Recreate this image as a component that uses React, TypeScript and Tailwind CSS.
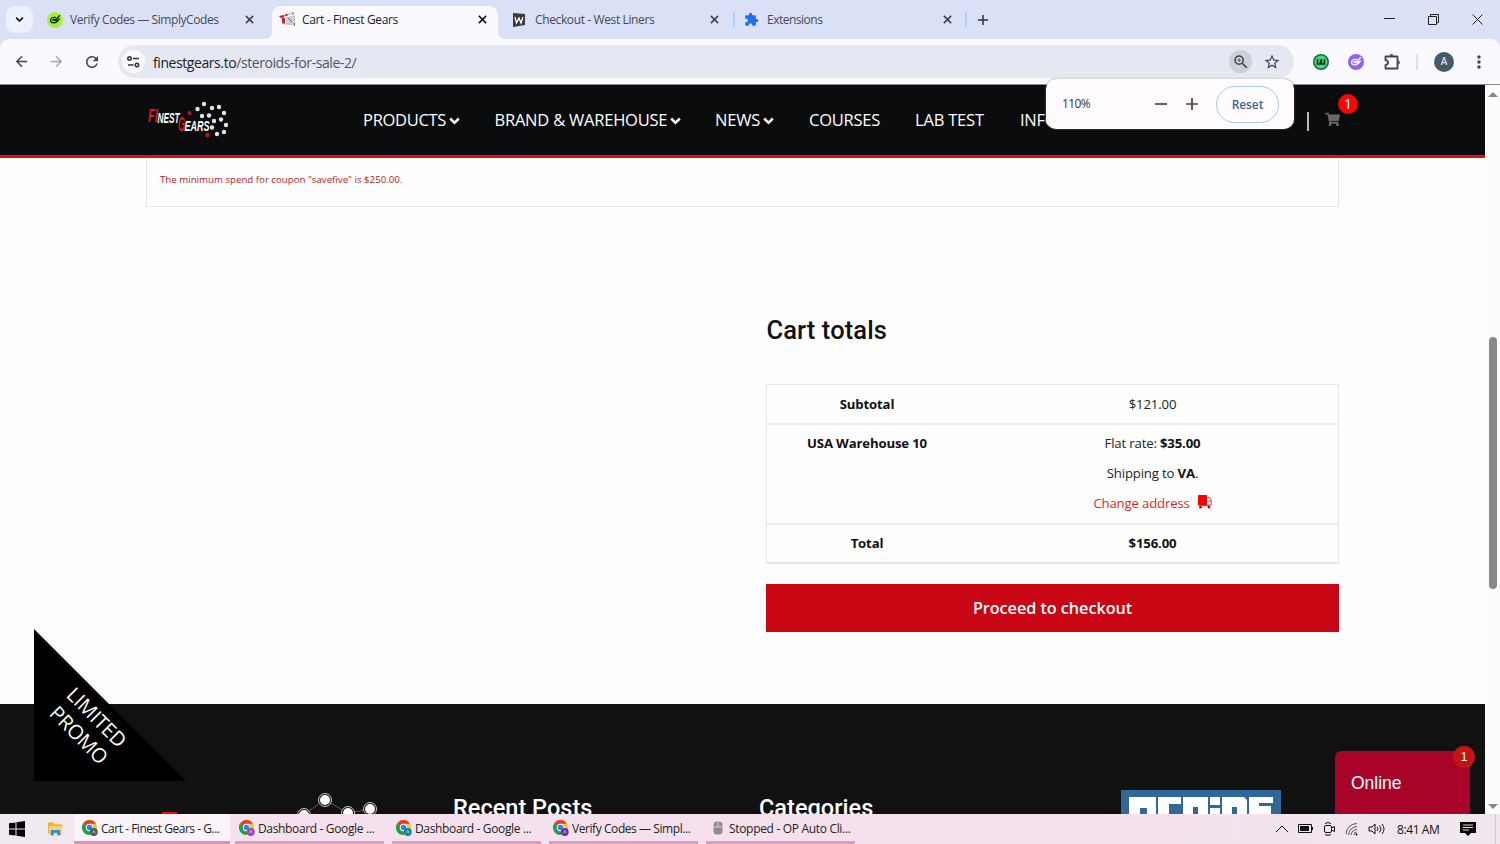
import React from "react";
import { FaShoppingCart } from "react-icons/fa";
import { MdExtension, MdStarOutline, MdZoomIn, MdArrowBack, MdArrowForward, MdRefresh, MdMoreVert } from "react-icons/md";

const UI = "font-['Open_Sans',sans-serif]";

function Close({ className = "" }: { className?: string }) {
  return (
    <svg viewBox="0 0 10 10" className={`size-[9px] shrink-0 ${className}`} stroke="currentColor" strokeWidth="1.700" fill="none">
      <path d="M1 1l8 8M9 1l-8 8" />
    </svg>
  );
}

function Swirl({ className }: { className: string }) {
  return (
    <svg viewBox="0 0 16 16" className={className} fill="none" stroke="currentColor" strokeWidth="1.300" strokeLinecap="round">
      <path d="M8.500 5.500C6 4.800 3.800 6 3.600 8s1.200 3 3.200 2.800C9 10.700 11 9.500 12 7M5.700 8.200C6.500 6.800 7.700 7.200 7.300 8.600M7.500 8.800l5-5M9.500 8.500l3-1.500" />
    </svg>
  );
}

function ChromeLogo({ badge }: { badge: string }) {
  return (
    <svg viewBox="0 0 16 16" className="size-4 shrink-0">
      <circle cx="7.500" cy="7.500" r="7.500" fill="#f9c21a" />
      <path d="M7.500 7.500L1 3.750A7.500 7.500 0 0 1 14 3.750H7.500z" fill="#e0402f" />
      <path d="M7.500 7.500L1 3.750A7.500 7.500 0 0 0 7.500 15l3.500-6z" fill="#1e9e50" />
      <circle cx="7.500" cy="7.500" r="3.700" fill="#fff" />
      <circle cx="7.500" cy="7.500" r="2.800" fill="#3b7de8" />
      <circle cx="11.800" cy="12" r="3.900" className={badge} />
      <path d="M10.400 13.400l1.400-3 1.400 3" stroke="#ffffffaa" strokeWidth=".8" fill="none" />
    </svg>
  );
}

function TabStrip() {
  const inactive = `${UI} pt-px text-[12px] text-[#44495a]`;
  return (
    <div className="flex h-[39px] items-start bg-[#dae1f7]">
      <div className="mt-[6px] ml-[6px] grid h-[27px] w-[27px] place-items-center rounded-[9px] bg-[#edf1fd]">
        <svg viewBox="0 0 10 6" className="h-[5px] w-[9px]" fill="none" stroke="#111" strokeWidth="2"><path d="M1 .8l4 4 4-4" /></svg>
      </div>
      <div className="flex h-[39px] w-[239px] items-center pr-[18px] pl-[14px]">
        <span className="grid size-4 place-items-center rounded-full bg-[#a6f03d] text-[#14230a]"><Swirl className="size-4" /></span>
        <span className={`${inactive} ml-[7px] flex-1 whitespace-nowrap tracking-[-0.42px]`}>Verify Codes — SimplyCodes</span>
        <Close className="text-[#3a3f4c]" />
      </div>
      <div className="relative mt-[6px] flex h-[33px] w-[226px] items-center rounded-t-[9px] bg-[#f9f9ff] pr-[11px] pb-[6px] pl-[7px]">
        <svg className="absolute bottom-0 -left-2 size-2" viewBox="0 0 8 8"><path d="M0 8Q8 8 8 0v8z" fill="#f9f9ff" /></svg>
        <svg className="absolute -right-2 bottom-0 size-2" viewBox="0 0 8 8"><path d="M8 8Q0 8 0 0v8z" fill="#f9f9ff" /></svg>
        <svg viewBox="0 0 17 15" className="h-[15px] w-[17px]" fill="none">
          <path d="M4 4l4-1 7-3M8 6l7-2v8H8z" stroke="#b5b5b9" strokeWidth="1.300" />
          <path d="M7 5l7-1v8l-7-1z" fill="#cfcfd3" />
          <path d="M0 4l5-1 .5 1.500-4 1.500zM3 5l3 1v6l-3-1z" fill="#c0262c" />
          <circle cx="7.500" cy="3" r="1.200" fill="#c0262c" />
          <path d="M9 6l4 4M15.500 11v3M13 3l2-2" stroke="#66666c" />
        </svg>
        <span className={`${UI} ml-[6px] flex-1 whitespace-nowrap pt-px text-[12px] tracking-[-0.36px] text-[#202124]`}>Cart - Finest Gears</span>
        <Close className="text-[#111]" />
      </div>
      <div className="flex h-[39px] w-[235px] items-center pr-[14px] pl-[15px]">
        <svg viewBox="0 0 12 14" className="h-[14px] w-[12px]"><path d="M0 0l12 1v11L0 14z" fill="#3b3b3b" /><path d="M2 4l1.500 6L6 5l2 5 2-6" stroke="#fff" fill="none" strokeWidth="1.300" /></svg>
        <span className={`${inactive} ml-[10px] flex-1 whitespace-nowrap tracking-[-0.38px]`}>Checkout - West Liners</span>
        <Close className="text-[#3a3f4c]" />
      </div>
      <div className="mt-[11px] h-[16px] w-[2px] bg-[#b5cffb]" />
      <div className="flex h-[39px] w-[230px] items-center pr-[13px] pl-[9px]">
        <MdExtension className="size-[15px] text-[#1a73e8]" />
        <span className={`${inactive} ml-[8px] flex-1 whitespace-nowrap tracking-[-0.5px]`}>Extensions</span>
        <Close className="text-[#3a3f4c]" />
      </div>
      <div className="mt-[11px] h-[16px] w-[2px] bg-[#b5cffb]" />
      <svg viewBox="0 0 10 10" className="mt-[15px] ml-[11px] size-[10px]" stroke="#30333d" strokeWidth="1.500"><path d="M5 0v10M0 5h10" /></svg>
      <div className="mt-[14px] mr-[17px] ml-auto flex items-center gap-[33px] text-[#222]">
        <svg viewBox="0 0 11 11" className="size-[11px]" stroke="currentColor"><path d="M0 4.500h11" /></svg>
        <svg viewBox="0 0 11 11" className="size-[11px]" stroke="currentColor" fill="none"><path d="M.5 2.500h8v8h-8zM2.500 2.500v-2h8v8h-2" /></svg>
        <svg viewBox="0 0 11 11" className="size-[11px]" stroke="currentColor"><path d="M.5.500l10 10M10.500.500l-10 10" /></svg>
      </div>
    </div>
  );
}

function Toolbar() {
  return (
    <div className="bg-[#dae1f7]">
      <div className="flex h-[46px] items-center rounded-t-[9px] border-b border-[#8a8c92] bg-[#f9f9ff] text-[#41444f]">
        <MdArrowBack className="ml-[13px] size-[17px]" />
        <MdArrowForward className="ml-[18px] size-[17px] text-[#a5a7ae]" />
        <MdRefresh className="ml-[18px] size-[18px]" />
        <div className="ml-[17px] flex h-[33px] w-[1176px] items-center rounded-full bg-[#e5e8f3] pr-[13px] pl-[4px]">
          <span className="grid size-[23px] place-items-center rounded-full bg-[#fbfbff]">
            <svg viewBox="0 0 13 12" className="h-[12px] w-[13px]" fill="none" stroke="#30333c" strokeWidth="1.600"><circle cx="2.500" cy="2.500" r="1.700" /><path d="M6 2.500h6M1 9h5.500" /><circle cx="10" cy="9" r="1.700" /></svg>
          </span>
          <span className={`${UI} ml-[8px] flex-1 pt-px text-[14px] tracking-[-0.42px] text-[#51555f]`}><span className="text-[#202124]">finestgears.to</span>/steroids-for-sale-2/</span>
          <span className="grid size-[23px] place-items-center rounded-full bg-[#cdcfd9]"><MdZoomIn className="size-[18px]" /></span>
          <MdStarOutline className="ml-[11px] size-[18px]" />
        </div>
        <svg viewBox="0 0 16 16" className="ml-[19px] size-[16px]"><circle cx="8" cy="8" r="8" fill="#176b37" /><circle cx="8" cy="8" r="6.500" fill="#42d777" /><path d="M4.500 5v5h3V6h1v4h3V5" fill="none" stroke="#08331b" strokeWidth="1.500" /></svg>
        <span className="ml-[19px] grid size-[16px] place-items-center rounded-full bg-[#9560f3] text-white"><Swirl className="size-4" /></span>
        <svg viewBox="0 0 18 18" className="ml-[19px] size-[18px]" fill="none" stroke="currentColor" strokeWidth="1.800" strokeLinejoin="round"><path d="M2.500 3.500h12v12h-12v-3.700q2.500 0 2.500-2.300t-2.500-2.300z" /><path d="M6.500 2.700a2 1.700 0 0 1 4 0zM15.300 7.500a1.500 2 0 0 1 0 4z" fill="currentColor" stroke="none" /></svg>
        <span className="ml-[15px] h-[16px] w-[2px] bg-[#d3e2fd]" />
        <span className={`${UI} ml-[16px] grid size-[20px] place-items-center rounded-full bg-[#455a64] text-[10px] font-semibold text-[#dde]`}>A</span>
        <MdMoreVert className="ml-[15px] size-[20px]" />
      </div>
    </div>
  );
}

function SiteLogo() {
  const dots = [[57, 3], [50.500, 8], [65, 7], [72, 6], [77, 12], [55, 15], [62, 14.500], [67, 20], [74, 18.500], [79, 24], [65, 26.500], [77, 31], [70, 33]];
  return (
    <svg viewBox="0 0 84 38" className="h-[38px] w-[84px]">
      <g fontFamily="Liberation Sans" fontWeight="bold" fontStyle="italic">
        <text x="1" y="21" fontSize="18" fill="#df171d" textLength="10" lengthAdjust="spacingAndGlyphs">FI</text>
        <text x="10.500" y="22" fontSize="15" fill="#fff" textLength="22" lengthAdjust="spacingAndGlyphs">NEST</text>
        <text x="31" y="30" fontSize="20" fill="#df171d" textLength="7" lengthAdjust="spacingAndGlyphs">G</text>
        <text x="37.500" y="30" fontSize="15" fill="#fff" textLength="25" lengthAdjust="spacingAndGlyphs">EARS</text>
      </g>
      {dots.map(([x, y]) => <circle key={`${x}-${y}`} cx={x} cy={y} r="2.200" fill="#e4e4e4" />)}
      <circle cx="42.500" cy="12" r="2.100" fill="#b5191f" /><circle cx="60.500" cy="34" r="2.200" fill="#b5191f" />
    </svg>
  );
}

function NavItem({ label, arrow, className }: { label: string; arrow?: boolean; className: string }) {
  return (
    <span className={`flex shrink-0 items-center whitespace-nowrap ${className}`}>
      {label}
      {arrow && <svg viewBox="0 0 11 8" className="mt-[2px] ml-auto h-[8px] w-[11px]" fill="none" stroke="currentColor" strokeWidth="2.500"><path d="M1.200 1.500l4.300 4.300 4.300-4.300" /></svg>}
    </span>
  );
}

function Header() {
  return (
    <div className={`relative flex h-[73px] shrink-0 items-center border-b-[3px] border-[#e80d0d] bg-[#0a0c0d] pl-[147px] ${UI} text-[16.500px] text-white`}>
      <SiteLogo />
      <NavItem label="PRODUCTS" arrow className="ml-[132px] w-[97px] tracking-[-0.3px]" />
      <NavItem label="BRAND & WAREHOUSE" arrow className="ml-[34.500px] w-[186px] tracking-[-0.220px]" />
      <NavItem label="NEWS" arrow className="ml-[34.500px] w-[59px] tracking-[-0.200px]" />
      <NavItem label="COURSES" className="ml-[35px] w-[71px] tracking-[-0.240px]" />
      <NavItem label="LAB TEST" className="ml-[35px] w-[70px] tracking-[-0.200px]" />
      <NavItem label="INFO" className="ml-[35px] w-[71px] tracking-[-0.3px]" />
      <span className="mt-[2px] ml-[216px] h-[19px] w-[2px] bg-[#c4b8aa]" />
      <FaShoppingCart className="mb-[2px] ml-[16px] size-[15px] text-[#686868]" />
      <span className="absolute top-[9px] left-[1338px] flex size-[20px] items-center justify-center rounded-full bg-[#fa0505] text-[14px] leading-[20px]">1</span>
      <div className="absolute -top-[6px] left-[1046px] z-10 flex h-[50px] w-[248px] items-center rounded-[10px] bg-[#fffbff] pr-[15px] pl-[16px] text-[12px] text-[#333] shadow-[0_0_2px_#777]">
        <span className="flex-1 tracking-[-0.600px]">110%</span>
        <svg viewBox="0 0 12 12" className="size-3" stroke="#444" strokeWidth="1.700"><path d="M0 6h12" /></svg>
        <svg viewBox="0 0 12 12" className="ml-[19px] size-3" stroke="#444" strokeWidth="1.700"><path d="M0 6h12M6 0v12" /></svg>
        <span className="ml-[18px] flex h-[37px] w-[63px] items-center justify-center rounded-full border border-[#a8c7fa] pt-px font-semibold tracking-[-0.100px] text-[#435f93]">Reset</span>
      </div>
    </div>
  );
}

function Truck() {
  return (
    <svg viewBox="0 0 14 14" className="mt-[2px] h-[14px] w-[14px]"><path d="M0 0h9v10.500H0z" fill="#fb0000" /><path d="M9 2.500h3l1.200 3V10H9M3 10.500h8M10.500 6H13" stroke="#e33" fill="none" /><circle cx="2.500" cy="12" r="1.500" fill="#e50000" /><circle cx="11" cy="12" r="1.500" fill="#e50000" /></svg>
  );
}

function CartTotals() {
  return (
    <div className="ml-[766px] w-[573px] pt-[107px]">
      <h2 className="h-[32px] pl-[0.500px] font-[Roboto] text-[25.500px] leading-[32px] font-medium tracking-[0.1px] text-[#111]">Cart totals</h2>
      <div className={`mt-[38px] h-[180px] border border-b-2 border-[#e6e6e6] text-center ${UI} text-[13.200px] leading-[20px] tracking-[-0.17px] text-[#222]`}>
        <div className="grid h-[40px] grid-cols-[200px_1fr] items-center border-b-2 border-[#ececec]"><b className="text-[#111]">Subtotal</b><span>$121.00</span></div>
        <div className="grid h-[100px] grid-cols-[200px_1fr] border-b-2 border-[#ececec] pt-[8px]">
          <b className="text-[#111]">USA Warehouse 10</b>
          <div className="flex flex-col gap-[10px]">
            <span>Flat rate: <b className="text-[#111]">$35.00</b></span>
            <span>Shipping to <b className="text-[#111]">VA</b>.</span>
            <span className="flex justify-center gap-[8px] text-[#e81e1e]">Change address <Truck /></span>
          </div>
        </div>
        <div className="grid h-[38px] grid-cols-[200px_1fr] items-center pb-[2px] font-bold text-[#111]"><span>Total</span><span>$156.00</span></div>
      </div>
      <button className={`mt-[20px] flex h-[48px] w-full items-center justify-center bg-[#c90613] ${UI} text-[16.200px] font-semibold tracking-[-0.03px] text-white`}>Proceed to checkout</button>
    </div>
  );
}

function Footer() {
  return (
    <div className="relative mt-auto flex h-[110px] shrink-0 overflow-hidden bg-[#111] font-[Roboto] text-[23.500px] leading-[24px] font-medium text-white">
      <span className="mt-[108px] ml-[162px] h-[2px] w-[15px] shrink-0 bg-[#df1010]" />
      <svg viewBox="0 0 80 26" className="mt-[88px] ml-[120px] h-[26px] w-[80px] shrink-0">
        <path d="M7 22L28 8l23 13 22-4" stroke="#777" fill="none" strokeWidth=".7" />
        {[[7, 23], [28, 8], [51, 21], [73, 17]].map(([x, y]) => <g key={x}><circle cx={x} cy={y} r="6.500" stroke="#ccc" fill="#111" /><circle cx={x} cy={y} r="5" fill="#fff" /></g>)}
      </svg>
      <span className="mt-[92px] ml-[76px] w-[306px] shrink-0 tracking-[0.020px]">Recent Posts</span>
      <span className="mt-[92px] w-[362px] shrink-0 tracking-[0.020px]">Categories</span>
      <svg viewBox="0 0 160 24" className="mt-[86px] h-[24px] w-[160px] shrink-0">
        <path d="M0 0h160v24H0z" fill="#326799" />
        <path d="M8 7h27v17H26v-6h-7v6H8zM37 7h23v7H48v10H37zM62 7h25v17H77v-7h-5v7H62zM89 7h10v8H89zM89 18h10v6H89zM101 7h22l3 3v14h-10v-7h-5v7h-10zM128 7h24v6h-14v3h12v8h-22z" fill="#fff" />
      </svg>
      <div className="mt-[47px] ml-[54px] h-[63px] w-[135px] shrink-0 rounded-t-[6px] bg-[#a80328] pt-[20px] pl-[16px] font-['Liberation_Sans',sans-serif] text-[17.500px] font-normal">Online</div>
      <span className="absolute top-[42px] left-[1453px] flex size-[22px] items-center justify-center rounded-full bg-[#c41514] font-['Liberation_Sans',sans-serif] text-[12px] leading-[12px] font-normal">1</span>
    </div>
  );
}

function Promo() {
  return (
    <div className="absolute top-[544px] left-[34px] h-[152px] w-[153px]">
      <svg viewBox="0 0 153 152" className="size-full"><path d="M0 0l152 152H0z" fill="#000" /></svg>
      <div className={`absolute top-[72px] left-[2.500px] w-[102px] rotate-45 text-center ${UI} text-[20px] leading-[25px] tracking-[-0.25px] text-white`}>LIMITED<br />PROMO</div>
    </div>
  );
}

function Page() {
  return (
    <div className="flex h-[729px]">
      <div className="relative flex w-[1485px] flex-col bg-[#fefefe]">
        <Header />
        <div className={`ml-[146px] h-[49px] w-[1193px] shrink-0 border border-t-0 border-[#e4e4e4] pt-[14px] pl-[13px] ${UI} text-[9.700px] leading-[16px] text-[#b2221f]`}>The minimum spend for coupon "savefive" is $250.00.</div>
        <CartTotals />
        <Footer />
        <Promo />
      </div>
      <div className="flex w-[15px] flex-col items-center bg-[#fcfcfc] pt-[7px] pb-[5px]">
        <svg viewBox="0 0 10 5" className="h-[5px] w-[10px]"><path d="M0 5l5-5 5 5z" fill="#888" /></svg>
        <div className="mt-[240px] h-[252px] w-[8px] rounded-full bg-[#898989]" />
        <svg viewBox="0 0 10 5" className="mt-auto h-[5px] w-[10px]"><path d="M0 0l5 5 5-5z" fill="#888" /></svg>
      </div>
    </div>
  );
}

function Task({ label, badge, active, icon, track }: { label: string; badge?: string; active?: boolean; icon?: boolean; track: string }) {
  return (
    <div className={`flex h-[30px] shrink-0 items-center border-b-[3px] text-[12px] text-[#222] ${active ? "mr-[5px] w-[156px] border-[#df91c0] bg-[#faf4fa] pl-[8px]" : "mr-[8px] w-[149px] border-[#df9bc8] pl-[4px]"}`}>
      {icon ? <svg viewBox="0 0 16 16" className="size-4"><rect x="3.500" y="1.500" width="9" height="13" rx="3.500" fill="#918b91" /><path d="M3.500 7h9M8 1.500V7" stroke="#d5cfd5" /></svg> : <ChromeLogo badge={badge ?? ""} />}
      <span className={`ml-[3px] pt-[2px] whitespace-nowrap ${track}`}>{label}</span>
    </div>
  );
}

function Taskbar() {
  return (
    <div className={`flex h-[30px] items-center bg-[linear-gradient(90deg,#f0eaf0_0,#f5e1ed_20%,#f5e1ed_70%,#efe7ef_100%)] ${UI}`}>
      <svg viewBox="0 0 16 16" className="ml-[9px] size-[16px]"><path d="M0 2.300L6.500 1.400v6.100H0zM7.500 1.200L16 0v7.500H7.500zM0 8.500h6.500v6.100L0 13.700zM7.500 8.500H16V16l-8.500-1.200z" fill="#000" /></svg>
      <svg viewBox="0 0 16 14" className="ml-[23px] h-[14px] w-[15px]"><path d="M0 0h6l1 2h8v10H0z" fill="#e9b43c" /><path d="M1 4h14v9H1z" fill="#fbd670" /><path d="M3 14V8h10v6h-3v-3H6v3z" fill="#298fd0" /></svg>
      <div className="ml-[11px] flex">
        <Task label="Cart - Finest Gears - G..." badge="fill-[#455a64]" active track="tracking-[-0.48px]" />
        <Task label="Dashboard - Google ..." badge="fill-[#a03fba]" track="tracking-[-0.35px]" />
        <Task label="Dashboard - Google ..." badge="fill-[#08849b]" track="tracking-[-0.35px]" />
        <Task label="Verify Codes — Simpl..." badge="fill-[#7627a5]" track="tracking-[-0.43px]" />
        <Task label="Stopped - OP Auto Cli..." icon track="tracking-[-0.32px]" />
      </div>
      <div className="mr-[4px] ml-auto flex items-center text-[#111]">
        <svg viewBox="0 0 12 8" className="h-[8px] w-[12px]" fill="none" stroke="currentColor"><path d="M0 7l6-6 6 6" /></svg>
        <svg viewBox="0 0 16 10" className="ml-[10px] h-[10px] w-[16px]"><path d="M.5.500h13v8H.5z" fill="none" stroke="#111" /><path d="M2 2h9v5H2zM14 3h1v3h-1z" fill="#111" /></svg>
        <svg viewBox="0 0 14 14" className="ml-[9px] size-[14px]" fill="none" stroke="currentColor"><rect x="1.500" y="3.500" width="7" height="7" rx="1.500" /><path d="M8.500 6l3-1.500v5L8.500 8M2 1.500Q5 -.3 8 1.500M2 12.500q3 1.800 6 0" /></svg>
        <svg viewBox="0 0 14 14" className="ml-[8px] size-[14px]" fill="none" stroke="#555"><path d="M1 12A11 11 0 0 1 12 1.500M3.500 13A9 9 0 0 1 12 4.500M6 13a6 6 0 0 1 6-5.500M9 13a3 3 0 0 1 3-3" /><circle cx="11.500" cy="12.500" r="1" fill="#111" stroke="none" /></svg>
        <svg viewBox="0 0 18 14" className="ml-[9px] h-[14px] w-[18px]" fill="none" stroke="currentColor"><path d="M1 5h3l3-3v10L4 9H1zM9 5q2 2 0 4M11.500 3.500q3 3.500 0 7M14 2q4 5 0 10" /></svg>
        <span className="ml-[11px] w-[46px] pt-[2px] text-[12px] tracking-[-0.4px] whitespace-nowrap">8:41 AM</span>
        <svg viewBox="0 0 16 16" className="ml-[17px] size-[16px]"><path d="M0 1h16v11h-5l-3 3-3-3H0z" fill="#090909" /><path d="M3 4h10M3 6.500h10M3 9h6" stroke="#ddd" /></svg>
        <span className="ml-[19px] h-[30px] w-px bg-[#d0c9d0]" />
      </div>
    </div>
  );
}

export default function App() {
  return (
    <div className="h-[844px] w-[1500px] overflow-hidden bg-white">
      <TabStrip />
      <Toolbar />
      <Page />
      <Taskbar />
    </div>
  );
}
